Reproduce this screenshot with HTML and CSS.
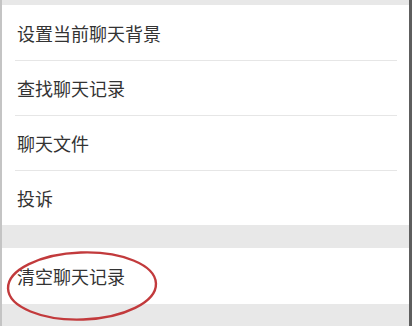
FILE: index.html
```html
<!DOCTYPE html>
<html lang="zh-CN">
<head>
    <meta charset="UTF-8">
    <meta name="viewport" content="width=device-width, initial-scale=1.0">
    <title>聊天设置</title>
    <link rel="stylesheet" href="styles.css">
</head>
<body>
    <div class="screen">
        <div class="gap top"></div>
        <ul class="group">
            <li>设置当前聊天背景</li>
            <li>查找聊天记录</li>
            <li>聊天文件</li>
            <li>投诉</li>
        </ul>
        <div class="gap"></div>
        <ul class="group">
            <li class="clear">
                清空聊天记录
                <!-- 红圈标注 -->
                <svg class="mark" width="160" height="74" viewBox="0 0 160 74">
                    <ellipse cx="80" cy="37" rx="74" ry="33.5" fill="none" stroke="#c23a3c" stroke-width="2.4" transform="rotate(-2 80 37)"/>
                </svg>
            </li>
        </ul>
        <div class="gap bottom"></div>
    </div>
</body>
</html>
```

FILE: styles.css
```css
* {
    box-sizing: border-box;
    margin: 0;
    padding: 0;
}
body {
    width: 412px;
    height: 326px;
    overflow: hidden;
    background-color: #ebebeb;
    font-family: "Noto Sans CJK SC", "Noto Sans", sans-serif;
}
.screen {
    height: 326px;
    border-left: 2px solid #c4c4c4;
    border-right: 3px solid #5e5e5e;
    background-color: #ebebeb;
}
.gap {
    height: 23px;
    background-color: #e8e8e8;
}
.gap.top {
    height: 5px;
}
.gap.bottom {
    height: 22px;
}
.group {
    list-style: none;
    background-color: #fff;
}
.group li {
    position: relative;
    height: 55px;
    display: flex;
    align-items: center;
    padding-left: 15px;
    font-size: 18px;
    color: #333;
}
.group li + li::before {
    content: "";
    position: absolute;
    top: 0;
    left: 13px;
    right: 12px;
    height: 1px;
    background-color: #e6e6e6;
}
.group .clear {
    height: 56px;
}
.mark {
    position: absolute;
    left: 0;
    top: 1px;
}
```
